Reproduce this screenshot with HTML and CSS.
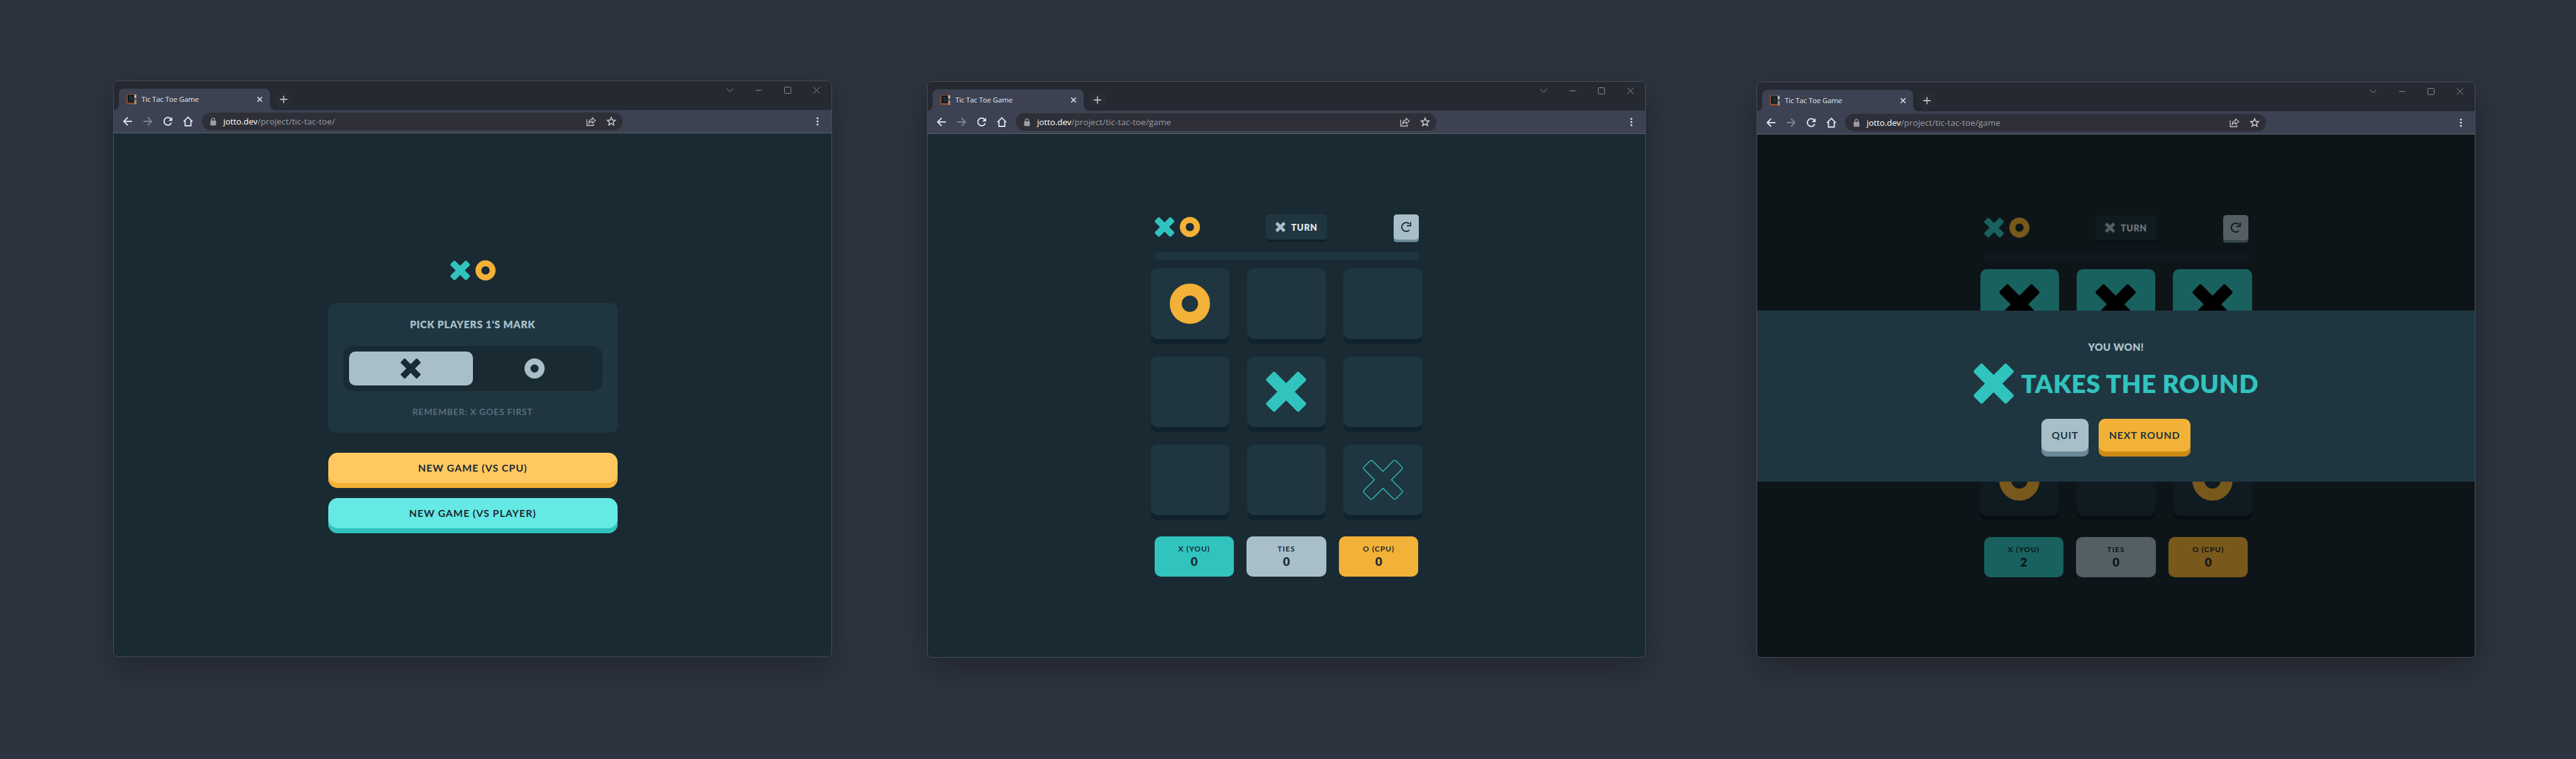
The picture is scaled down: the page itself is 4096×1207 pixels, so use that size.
FILE: index.html
```html
<!DOCTYPE html>
<html lang="en">
<head>
<meta charset="utf-8">
<title>Tic Tac Toe Game</title>
<link rel="stylesheet" href="styles.css">
</head>
<body>
<svg class="defs" aria-hidden="true">
  <symbol id="x" viewBox="0 0 64 64"><path d="M15.002 1.147 32 18.145 48.998 1.147a3 3 0 0 1 4.243 0l9.612 9.612a3 3 0 0 1 0 4.243L45.855 32l16.998 16.998a3 3 0 0 1 0 4.243l-9.612 9.612a3 3 0 0 1-4.243 0L32 45.855 15.002 62.853a3 3 0 0 1-4.243 0L1.147 53.241a3 3 0 0 1 0-4.243L18.145 32 1.147 15.002a3 3 0 0 1 0-4.243l9.612-9.612a3 3 0 0 1 4.243 0Z" fill="currentColor"/></symbol>
  <symbol id="x-outline" viewBox="0 0 64 64"><path d="M15.002 1.147 32 18.145 48.998 1.147a3 3 0 0 1 4.243 0l9.612 9.612a3 3 0 0 1 0 4.243L45.855 32l16.998 16.998a3 3 0 0 1 0 4.243l-9.612 9.612a3 3 0 0 1-4.243 0L32 45.855 15.002 62.853a3 3 0 0 1-4.243 0L1.147 53.241a3 3 0 0 1 0-4.243L18.145 32 1.147 15.002a3 3 0 0 1 0-4.243l9.612-9.612a3 3 0 0 1 4.243 0Z" fill="none" stroke="currentColor" stroke-width="1.4" transform="translate(.9 .9) scale(.972)"/></symbol>
  <symbol id="o" viewBox="0 0 64 64"><circle cx="32" cy="32" r="22.5" fill="none" stroke="currentColor" stroke-width="19"/></symbol>
  <symbol id="logo" viewBox="0 0 72 32">
    <g fill="#31c3bd" transform="translate(15.7 16)"><rect x="-18" y="-5.2" width="36" height="10.4" rx="2.6" transform="rotate(45)"/><rect x="-18" y="-5.2" width="36" height="10.4" rx="2.6" transform="rotate(-45)"/></g>
    <circle cx="56" cy="16" r="11.3" fill="none" stroke="#f2b137" stroke-width="9.4"/>
  </symbol>
  <symbol id="restart" viewBox="0 0 16 16"><path d="M12.9 3.1A7 7 0 1 0 13 13" fill="none" stroke="currentColor" stroke-width="2"/><path d="M15 0V6H9" fill="none" stroke="currentColor" stroke-width="1.9"/></symbol>
  <symbol id="favicon" viewBox="0 0 16 16"><path fill="#8a4a2c" d="M0 0h13v16H0z"/><path fill="#0f1a20" d="M2 1h10v12H2z"/><path fill="#1b2e39" d="M5 3h5v8H5z"/><path fill="#8f948e" d="M13 0h3v16h-3z"/><path fill="#4d5452" d="M13 6h3v3h-3z"/><path fill="#d5d2c8" d="M13 2h2v3h-2z"/></symbol>
  <symbol id="close" viewBox="0 0 10 10"><path d="M1.3 1.3l7.4 7.4M8.7 1.3L1.3 8.7" fill="none" stroke="currentColor" stroke-width="1.6"/></symbol>
  <symbol id="plus" viewBox="0 0 12 12"><path d="M6 .2v11.6M.2 6h11.6" fill="none" stroke="currentColor" stroke-width="1.8"/></symbol>
  <symbol id="back" viewBox="0 0 16 16"><path d="M15 8H2.4M8.2 1.8L2 8l6.2 6.2" fill="none" stroke="currentColor" stroke-width="2"/></symbol>
  <symbol id="forward" viewBox="0 0 16 16"><path d="M1 8h12.6M7.8 1.8L14 8l-6.2 6.2" fill="none" stroke="currentColor" stroke-width="2"/></symbol>
  <symbol id="reload" viewBox="0 0 16 16"><path d="M13.6 10.2A6.1 6.1 0 1 1 12.4 3.8" fill="none" stroke="currentColor" stroke-width="2"/><path d="M15 .9v6.3H8.7z" fill="currentColor"/></symbol>
  <symbol id="home" viewBox="0 0 16 16"><path d="M1 8.4L8 1.4l7 7M3.4 7v8h9.2V7" fill="none" stroke="currentColor" stroke-width="2"/></symbol>
  <symbol id="lock" viewBox="0 0 10 13"><path d="M2.5 5.5V3.3a2.5 2.5 0 0 1 5 0v2.2" fill="none" stroke="currentColor" stroke-width="1.3"/><rect x=".5" y="4.8" width="9" height="7.7" rx="1" fill="currentColor"/></symbol>
  <symbol id="share" viewBox="0 0 16 16"><path d="M1.2 4.5v10h10.6v-2.4" fill="none" stroke="currentColor" stroke-width="1.3"/><path d="M4.2 11.2C4.2 7 6.4 4.9 9.8 4.8V2l5 4.4-5 4.4V8.2C7.4 8.2 5.6 9 4.2 11.2z" fill="none" stroke="currentColor" stroke-width="1.2"/></symbol>
  <symbol id="star" viewBox="0 0 16 16"><path d="M8 1.700l1.800 4.200 4.600.4-3.500 3 1.100 4.500L8 11.400l-4 2.400 1.100-4.500-3.500-3 4.600-.4z" fill="none" stroke="currentColor" stroke-width="1.6"/></symbol>
  <symbol id="dots" viewBox="0 0 4 14"><circle cx="2" cy="2" r="1.6" fill="currentColor"/><circle cx="2" cy="7" r="1.6" fill="currentColor"/><circle cx="2" cy="12" r="1.6" fill="currentColor"/></symbol>
  <symbol id="win-down" viewBox="0 0 11 11"><path d="M.5 2.500l5 5.500 5-5.500" fill="none" stroke="currentColor"/></symbol>
  <symbol id="win-min" viewBox="0 0 11 11"><path d="M.5 5.500h10" fill="none" stroke="currentColor"/></symbol>
  <symbol id="win-max" viewBox="0 0 11 11"><rect x=".5" y=".5" width="10" height="10" rx="1" fill="none" stroke="currentColor"/></symbol>
  <symbol id="win-close" viewBox="0 0 11 11"><path d="M.5.5l10 10M10.500.5l-10 10" fill="none" stroke="currentColor"/></symbol>
</svg>

<main class="stage">
  <section class="window">
    <div class="tabstrip">
      <div class="tab"><svg class="i16"><use href="#favicon"/></svg><span class="tab-title">Tic Tac Toe Game</span><svg class="i10"><use href="#close"/></svg></div>
      <div class="newtab"><svg class="i12"><use href="#plus"/></svg></div>
      <div class="controls"><svg><use href="#win-down"/></svg><svg><use href="#win-min"/></svg><svg><use href="#win-max"/></svg><svg><use href="#win-close"/></svg></div>
    </div>
    <div class="toolbar">
      <div class="nav"><svg><use href="#back"/></svg><svg class="off"><use href="#forward"/></svg><svg><use href="#reload"/></svg><svg><use href="#home"/></svg></div>
      <div class="omnibox"><svg class="lock"><use href="#lock"/></svg><span class="host">jotto.dev</span><span class="path">/project/tic-tac-toe/</span><svg class="i16 share"><use href="#share"/></svg><svg class="i16"><use href="#star"/></svg></div>
      <svg class="dots"><use href="#dots"/></svg>
    </div>
    <div class="page menu">
      <svg class="logo"><use href="#logo"/></svg>
      <div class="card">
        <h1 class="card-title">PICK PLAYERS 1'S MARK</h1>
        <div class="toggle">
          <div class="choice picked"><svg class="i32"><use href="#x"/></svg></div>
          <div class="choice"><svg class="i32"><use href="#o"/></svg></div>
        </div>
        <p class="hint">REMEMBER: X GOES FIRST</p>
      </div>
      <div class="start cpu">NEW GAME (VS CPU)</div>
      <div class="start player">NEW GAME (VS PLAYER)</div>
    </div>
  </section>

  <section class="window second">
    <div class="tabstrip">
      <div class="tab"><svg class="i16"><use href="#favicon"/></svg><span class="tab-title">Tic Tac Toe Game</span><svg class="i10"><use href="#close"/></svg></div>
      <div class="newtab"><svg class="i12"><use href="#plus"/></svg></div>
      <div class="controls"><svg><use href="#win-down"/></svg><svg><use href="#win-min"/></svg><svg><use href="#win-max"/></svg><svg><use href="#win-close"/></svg></div>
    </div>
    <div class="toolbar">
      <div class="nav"><svg><use href="#back"/></svg><svg class="off"><use href="#forward"/></svg><svg><use href="#reload"/></svg><svg><use href="#home"/></svg></div>
      <div class="omnibox"><svg class="lock"><use href="#lock"/></svg><span class="host">jotto.dev</span><span class="path">/project/tic-tac-toe/game</span><svg class="i16 share"><use href="#share"/></svg><svg class="i16"><use href="#star"/></svg></div>
      <svg class="dots"><use href="#dots"/></svg>
    </div>
    <div class="page">
      <div class="game">
        <div class="head">
          <svg class="logo"><use href="#logo"/></svg>
          <div class="turn"><svg class="i16"><use href="#x"/></svg><span>TURN</span></div>
          <div class="restart"><svg class="i16"><use href="#restart"/></svg></div>
        </div>
        <div class="timer"></div>
        <div class="board">
          <div class="tile yellow"><svg><use href="#o"/></svg></div><div class="tile"></div><div class="tile"></div>
          <div class="tile"></div><div class="tile teal"><svg><use href="#x"/></svg></div><div class="tile"></div>
          <div class="tile"></div><div class="tile"></div><div class="tile teal"><svg><use href="#x-outline"/></svg></div>
        </div>
        <div class="scores">
          <div class="score bg-teal"><span>X (YOU)</span><b>0</b></div>
          <div class="score bg-silver"><span>TIES</span><b>0</b></div>
          <div class="score bg-yellow"><span>O (CPU)</span><b>0</b></div>
        </div>
      </div>
    </div>
  </section>

  <section class="window third">
    <div class="tabstrip">
      <div class="tab"><svg class="i16"><use href="#favicon"/></svg><span class="tab-title">Tic Tac Toe Game</span><svg class="i10"><use href="#close"/></svg></div>
      <div class="newtab"><svg class="i12"><use href="#plus"/></svg></div>
      <div class="controls"><svg><use href="#win-down"/></svg><svg><use href="#win-min"/></svg><svg><use href="#win-max"/></svg><svg><use href="#win-close"/></svg></div>
    </div>
    <div class="toolbar">
      <div class="nav"><svg><use href="#back"/></svg><svg class="off"><use href="#forward"/></svg><svg><use href="#reload"/></svg><svg><use href="#home"/></svg></div>
      <div class="omnibox"><svg class="lock"><use href="#lock"/></svg><span class="host">jotto.dev</span><span class="path">/project/tic-tac-toe/game</span><svg class="i16 share"><use href="#share"/></svg><svg class="i16"><use href="#star"/></svg></div>
      <svg class="dots"><use href="#dots"/></svg>
    </div>
    <div class="page">
      <div class="game">
        <div class="head">
          <svg class="logo"><use href="#logo"/></svg>
          <div class="turn"><svg class="i16"><use href="#x"/></svg><span>TURN</span></div>
          <div class="restart"><svg class="i16"><use href="#restart"/></svg></div>
        </div>
        <div class="timer"></div>
        <div class="board">
          <div class="tile win"><svg><use href="#x"/></svg></div><div class="tile win"><svg><use href="#x"/></svg></div><div class="tile win"><svg><use href="#x"/></svg></div>
          <div class="tile"></div><div class="tile"></div><div class="tile"></div>
          <div class="tile yellow"><svg><use href="#o"/></svg></div><div class="tile"></div><div class="tile yellow"><svg><use href="#o"/></svg></div>
        </div>
        <div class="scores">
          <div class="score bg-teal"><span>X (YOU)</span><b>2</b></div>
          <div class="score bg-silver"><span>TIES</span><b>0</b></div>
          <div class="score bg-yellow"><span>O (CPU)</span><b>0</b></div>
        </div>
      </div>
      <div class="overlay">
        <div class="modal">
          <p class="outcome">YOU WON!</p>
          <div class="winner"><svg><use href="#x"/></svg><h2>TAKES THE ROUND</h2></div>
          <div class="actions"><div class="action quit">QUIT</div><div class="action next">NEXT ROUND</div></div>
        </div>
      </div>
    </div>
  </section>
</main>
</body>
</html>
```
FILE: styles.css
```css
* { box-sizing: border-box; margin: 0; }
body { background: #2d333f; font-family: Lato, sans-serif; color: #1a2a33; }
svg { display: block; flex: none; }
.defs { position: absolute; width: 0; height: 0; }

.stage { display: flex; height: 1207px; padding: 128px 0 0 180px; align-items: flex-start; overflow: hidden; }
.window { flex: none; width: 1143px; height: 917px; border: 1px solid #4b4e54; border-radius: 8px; overflow: hidden; background: #1a2a33; box-shadow: 0 18px 48px rgba(0, 0, 0, .28); display: flex; flex-direction: column; }
.second { margin: 1px 0 0 151px; }
.third { height: 916px; margin: 2px 0 0 176px; }

/* browser chrome */
.tabstrip { display: flex; height: 46px; padding: 12px 0 0 8px; background: #252932; flex: none; }
.tab { position: relative; display: flex; align-items: center; width: 240px; height: 34px; padding: 0 11px 0 12px; background: #3c4252; border-radius: 8px 8px 0 0; color: #e6e9ef; }
.tab::before, .tab::after { content: ""; position: absolute; bottom: 0; width: 8px; height: 8px; }
.tab::before { left: -8px; background: radial-gradient(circle at 0 0, transparent 7.5px, #3c4252 8px); }
.tab::after { right: -8px; background: radial-gradient(circle at 100% 0, transparent 7.5px, #3c4252 8px); }
.tab-title { margin: 0 auto 0 8px; font: 11.5px/16px "Open Sans", sans-serif; letter-spacing: -.16px; white-space: nowrap; }
.newtab { width: 28px; height: 28px; margin: 3px 0 0 8px; border-radius: 50%; background: #282c34; color: #b4bac6; display: grid; place-items: center; }
.controls { display: flex; gap: 35px; margin: -3px 18px 0 auto; color: #8b8f98; }
.controls svg { width: 11px; height: 11px; }
.toolbar { display: flex; align-items: center; height: 37px; padding-left: 14px; background: #3c4252; border-bottom: 1px solid #5d646b; flex: none; }
.nav { display: flex; gap: 16px; color: #dbe0ea; }
.nav svg, .i16 { width: 16px; height: 16px; }
.nav .off { color: #7b8190; }
.omnibox { display: flex; align-items: center; width: 669px; height: 28px; margin-left: 14px; padding: 0 10px 0 13px; border-radius: 14px; background: #2e2f38; color: #c6c7ca; font: 13.5px/20px "Open Sans", sans-serif; }
.lock { width: 10px; height: 13px; margin-right: 11px; color: #9c9fa8; }
.host { color: #fff; letter-spacing: -.1px; }
.path { color: #9a9da3; letter-spacing: .07px; }
.share { margin: 0 16px 0 auto; }
.dots { width: 4px; height: 14px; margin: 0 20px 0 auto; color: #dbe0ea; }
.i10 { width: 10px; height: 10px; }
.i12 { width: 12px; height: 12px; }
.i32 { width: 32px; height: 32px; }

.page { position: relative; flex: 1; display: flex; flex-direction: column; align-items: center; }
.logo { width: 72px; height: 32px; }

/* start menu */
.menu { padding-top: 202px; }
.card { width: 460px; height: 206px; margin: 36px 0 32px; padding: 24px 24px 0; border-radius: 10px; background: #1f3641; text-align: center; }
.card-title { font-size: 16px; line-height: 20px; font-weight: 800; letter-spacing: .64px; color: #a8bfc9; }
.toggle { display: flex; height: 72px; margin: 24px 0 23px; padding: 9px; border-radius: 15px; background: #1a2a33; }
.choice { flex: 1; display: grid; place-items: center; border-radius: 10px; color: #a8bfc9; }
.picked { background: #a8bfc9; color: #1a2a33; }
.hint { font-size: 14px; line-height: 20px; font-weight: 600; letter-spacing: .78px; color: #5e747f; }
.start { width: 460px; height: 56px; margin-bottom: 16px; border-radius: 15px; font-size: 16px; line-height: 48px; font-weight: 700; letter-spacing: .93px; text-align: center; }
.cpu { background: #ffc860; box-shadow: inset 0 -8px #f2b137; }
.player { background: #65e9e4; box-shadow: inset 0 -8px #31c3bd; }

/* game */
.game { width: 432px; padding-top: 128px; }
.head { display: flex; justify-content: space-between; align-items: flex-start; height: 44px; margin: 0 6px; }
.head .logo { margin-top: 4px; }
.turn { display: flex; align-items: center; gap: 9px; width: 97px; height: 44px; padding: 0 0 4px 15px; border-radius: 5px; background: #1f3641; box-shadow: inset 0 -4px #10212a; color: #a8bfc9; font-size: 14px; font-weight: 800; letter-spacing: .7px; }
.turn span { color: #dbe8ed; }
.restart { width: 40px; height: 44px; padding: 12px; border-radius: 5px; background: #a8bfc9; box-shadow: inset 0 -4px #6b8997; color: #1f3641; }
.timer { height: 12px; margin: 16px 6px 14px; border-radius: 6px; background: #1f3641; }
.board { display: grid; grid-template-columns: repeat(3, 1fr); grid-auto-rows: 120px; gap: 20px 28px; }
.tile { display: flex; justify-content: center; padding-top: 24px; border-radius: 10px; background: #1f3641; box-shadow: inset 0 -8px #10212a; }
.tile svg { width: 64px; height: 64px; }
.yellow { color: #f2b137; }
.teal { color: #31c3bd; }
.win { background: #31c3bd; box-shadow: inset 0 -8px #118c87; color: #000; }
.scores { display: grid; grid-template-columns: repeat(3, 1fr); gap: 20px; margin: 26px 6px 0; }
.score { height: 64px; padding-top: 12px; border-radius: 10px; text-align: center; font-size: 12px; line-height: 16px; font-weight: 700; letter-spacing: 1px; }
.score span, .score b { display: block; }
.score b { font-size: 19px; line-height: 24px; font-weight: 800; letter-spacing: 0; }
.bg-teal { background: #31c3bd; }
.bg-silver { background: #a8bfc9; }
.bg-yellow { background: #f2b137; }

/* round result */
.overlay { position: absolute; inset: 0; padding-top: 280px; background: rgba(0, 0, 0, .5); }
.modal { height: 272px; padding-top: 48px; background: #1f3641; text-align: center; }
.outcome { font-size: 16px; line-height: 20px; font-weight: 800; letter-spacing: .35px; color: #a8bfc9; }
.winner { display: flex; justify-content: center; align-items: center; gap: 12px; margin: 16px 0 24px; color: #31c3bd; }
.winner svg { width: 64px; height: 64px; }
.winner h2 { font-size: 40px; line-height: 64px; font-weight: 800; letter-spacing: .59px; }
.actions { display: flex; justify-content: center; gap: 16px; }
.action { height: 60px; border-radius: 10px; font-size: 16px; line-height: 52px; font-weight: 700; letter-spacing: .85px; color: #1f3641; }
.quit { width: 75px; background: #a8bfc9; box-shadow: inset 0 -8px #6b8997; }
.next { width: 146px; background: #f2b137; box-shadow: inset 0 -8px #cc8b13; }
```
